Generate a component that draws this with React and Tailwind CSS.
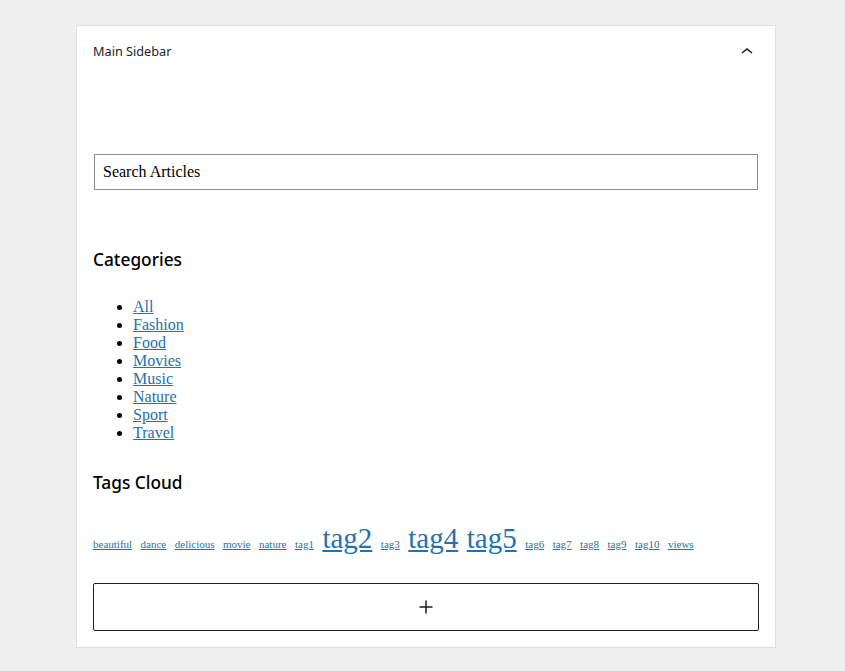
import React from 'react'

const categories = ['All', 'Fashion', 'Food', 'Movies', 'Music', 'Nature', 'Sport', 'Travel']

const tags = [
    ['beautiful', false], ['dance', false], ['delicious', false], ['movie', false], ['nature', false],
    ['tag1', false], ['tag2', true], ['tag3', false], ['tag4', true], ['tag5', true], ['tag6', false],
    ['tag7', false], ['tag8', false], ['tag9', false], ['tag10', false], ['views', false],
]

export default function App() {
    return (
        <div className="min-h-[671px] bg-[#f0f0f0] pt-[25px] pl-[76px]">
            <div className="w-[700px] h-[623px] bg-white border border-[#e0e0e0] flex flex-col">
                {/* header */}
                <div className="flex items-center justify-between h-[51px] pl-4 pr-4 font-['Noto_Sans',sans-serif] text-[12.7px] text-[#1e1e1e]">
                    <span className="pt-[1px]">Main Sidebar</span>
                    <svg width="24" height="24" viewBox="0 0 24 24" className="fill-[#1e1e1e]">
                        <path d="M6.5 12.4L12 8l5.5 4.4-.9 1.2L12 10l-4.6 3.6-.9-1.2z"/>
                    </svg>
                </div>

                <div className="px-4 flex flex-col">
                    <input
                        type="text"
                        readOnly
                        value="Search Articles"
                        className="mt-[77px] ml-[1px] w-[664px] h-[36px] border border-[#8c8f94] px-2 font-['Liberation_Serif',serif] text-base text-black outline-none"
                    />

                    <h2 className="mt-[57px] font-['Noto_Sans',sans-serif] text-[17.3px] font-medium leading-[25px] text-black">
                        Categories
                    </h2>

                    <ul className="mt-[26px] list-disc pl-10 font-['Liberation_Serif',serif] text-base leading-[18px]">
                        {categories.map((c) => (
                            <li key={c}><a href="#" className="text-[#2271b1] underline">{c}</a></li>
                        ))}
                    </ul>

                    <h2 className="mt-[28px] font-['Noto_Sans',sans-serif] text-[17.3px] font-medium leading-[25px] text-black">
                        Tags Cloud
                    </h2>

                    <div className="mt-[24px] flex items-baseline gap-x-[8.5px] font-['Liberation_Serif',serif] leading-[38px]">
                        {tags.map(([t, big]) => (
                            <a
                                key={t}
                                href="#"
                                className={big ? 'text-[29px] text-[#2271b1] underline' : 'text-[11px] text-[#2271b1] underline'}
                            >
                                {t}
                            </a>
                        ))}
                    </div>

                    <button className="mt-[20px] h-[48px] w-[666px] border border-[#1e1e1e] rounded-[2px] flex items-center justify-center">
                        <svg width="24" height="24" viewBox="0 0 24 24" className="fill-[#1e1e1e]">
                            <path d="M11.25 5.5h1.5v5.75h5.75v1.5h-5.75v5.75h-1.5v-5.75H5.5v-1.5h5.75z"/>
                        </svg>
                    </button>
                </div>
            </div>
        </div>
    )
}
